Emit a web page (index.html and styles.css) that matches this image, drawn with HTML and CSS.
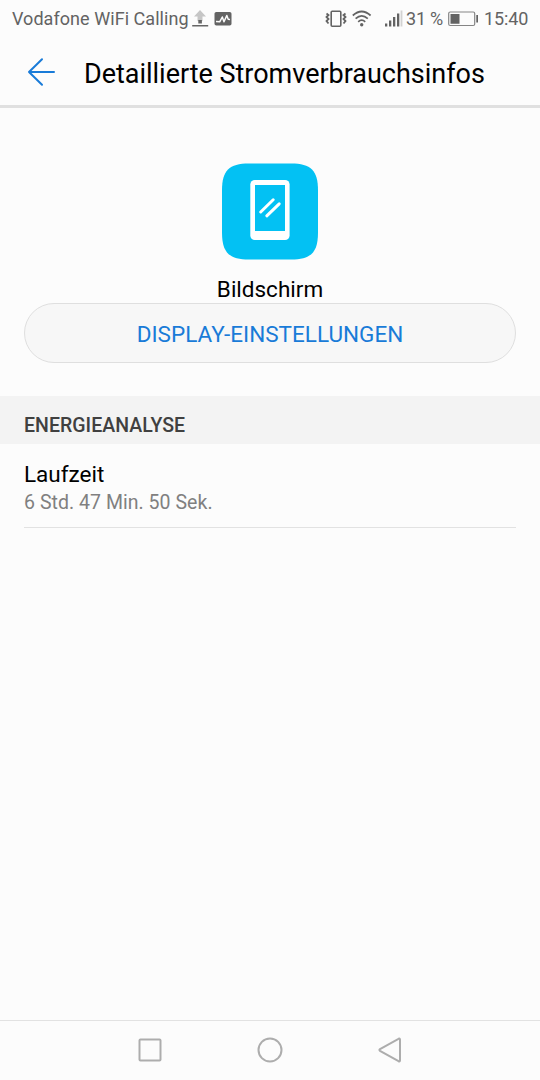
FILE: index.html
```html
<!DOCTYPE html>
<html lang="de">
<head>
  <meta charset="UTF-8" />
  <meta name="viewport" content="width=device-width, initial-scale=1.0"/>
  <title>Detaillierte Stromverbrauchsinfos</title>
  <link rel="stylesheet" href="styles.css">
</head>
<body>
  <!-- STATUS BAR -->
  <div class="status-bar">
    <span class="carrier">Vodafone WiFi Calling</span>
    <svg class="icon-upload" width="18" height="20" viewBox="0 0 18 20">
      <path d="M9 1 L15 7.500 H11.500 V12 H6.500 V7.500 H3 Z" fill="#c6c6c6"/>
      <path d="M7.300 11 H10.900 V14.500 H7.300 Z M1.200 15.900 H17.200 V17.400 H1.200 Z" fill="#666"/>
    </svg>
    <svg class="icon-activity" width="18" height="14" viewBox="0 0 18 14">
      <rect x=".5" y="0" width="17" height="13.500" rx="1.800" fill="#636363"/>
      <path d="M2 9.500 L5.700 9.800 L8.300 5 L10 9.800 L12.800 3.500 L14.200 7.300 L16 7.500" fill="none" stroke="#fcfcfc" stroke-width="1.500" stroke-linejoin="round"/>
    </svg>
    <div class="status-right">
      <svg class="icon-vibrate" width="22" height="18" viewBox="0 0 22 18" fill="none" stroke="#636363">
        <rect x="6.200" y="1.200" width="9.600" height="15" rx="1" stroke-width="1.600"/>
        <path d="M1.500 3.500 L3.500 5 L1.500 7 L3.500 9 L1.500 11 L3.500 13.500 M20.500 3.500 L18.500 5 L20.500 7 L18.500 9 L20.500 11 L18.500 13.500" stroke-width="1.800"/>
      </svg>
      <svg class="icon-wifi" width="20" height="18" viewBox="0 0 20 18" fill="none" stroke="#636363" stroke-width="1.700">
        <path d="M.8 5.500 Q9.700 -2.500 18.600 5.500 M3.600 8.700 Q9.700 3 15.800 8.700 M6.200 11.800 Q9.700 8.500 13.200 11.800"/>
        <circle cx="9.700" cy="14.800" r="1.700" fill="#636363" stroke="none"/>
      </svg>
      <svg class="icon-signal" width="18" height="18" viewBox="0 0 18 18" fill="#636363">
        <path d="M0 13.500 h2.300 v3 h-2.300 Z M4 10.500 h2.300 v6 h-2.300 Z M8 7 h2.300 v9.500 h-2.300 Z M12 3.500 h2.300 v13 h-2.300 Z"/>
        <path d="M15.600 .5 h1.800 v16 h-1.800 Z" fill="#d2d2d2"/>
      </svg>
      <span class="percent">31 %</span>
      <svg class="icon-battery" width="31" height="16" viewBox="0 0 31 16">
        <rect x=".7" y="1" width="26" height="13.500" rx="1.500" fill="none" stroke="#858585" stroke-width="1.200"/>
        <path d="M2.500 3 h9 v9.700 h-9 Z M28.300 4 h1.700 v7.500 h-1.700 Z" fill="#636363"/>
      </svg>
      <span class="clock">15:40</span>
    </div>
  </div>

  <!-- HEADER -->
  <header class="header">
    <svg class="icon-back" width="30" height="30" viewBox="0 0 30 30" fill="none" stroke="#197bd8" stroke-width="2" stroke-linecap="round" stroke-linejoin="round">
      <path d="M27 15 H2 M15 2.200 L2 15 L15 27.800"/>
    </svg>
    <h1>Detaillierte Stromverbrauchsinfos</h1>
  </header>

  <!-- CONTENT -->
  <main class="content">
    <div class="app">
      <svg class="app-icon" width="96" height="97" viewBox="0 -.5 96 97">
        <path d="M0 27 C0 7 7 0 27 0 H69 C89 0 96 7 96 27 V69 C96 89 89 96 69 96 H27 C7 96 0 89 0 69 Z" fill="#03c1f3"/>
        <rect x="28.300" y="16.500" width="39.300" height="60" rx="4.500" fill="#fff"/>
        <path d="M33 21.500 H63 V67.500 H33 Z" fill="#03c1f3"/>
        <path d="M38.700 48.500 L51.200 36.300 M44.800 52.300 L57.200 40.300" stroke="#fff" stroke-width="3" stroke-linecap="round"/>
      </svg>
      <span class="app-name">Bildschirm</span>
      <button class="btn">DISPLAY-EINSTELLUNGEN</button>
    </div>

    <h2>ENERGIEANALYSE</h2>
    <div class="item">
      <div class="item-title">Laufzeit</div>
      <div class="item-summary">6 Std. 47 Min. 50 Sek.</div>
    </div>
  </main>

  <!-- NAVIGATION BAR -->
  <nav>
    <svg width="26" height="26" viewBox="0 0 26 26"><rect x="2.500" y="2.500" width="21" height="21" rx="1"/></svg>
    <svg width="26" height="26" viewBox="0 0 26 26"><circle cx="13" cy="13" r="11.500"/></svg>
    <svg width="26" height="26" viewBox="0 0 26 26"><path d="M3 12.200 L21.500 1.800 Q23 1.200 23 2.500 V23.500 Q23 24.800 21.500 24.200 L3 13.800 Q1.800 13 3 12.200 Z"/></svg>
  </nav>
</body>
</html>
```
FILE: styles.css
```css
* { box-sizing: border-box; }
body { display: flex; flex-direction: column; height: 1080px; margin: 0; background: #fcfcfc; color: #000; font-family: Roboto, sans-serif; }
svg { display: block; flex: none; }

/* Status bar */
.status-bar { display: flex; align-items: center; height: 38px; padding: 0 12px; color: #636363; font-size: 18px; line-height: 38px; white-space: nowrap; }
.carrier { width: 179px; letter-spacing: 0.05px; }
.icon-activity { margin-left: 5px; }
.status-right { display: flex; align-items: center; margin-left: auto; }
.icon-wifi { margin-left: 5px; }
.icon-signal { margin-left: 13px; }
.percent { width: 45px; padding-left: 3px; letter-spacing: -0.2px; }
.clock { width: 49px; padding-left: 5px; letter-spacing: -0.1px; }

/* Header */
.header { display: flex; align-items: center; height: 70px; padding: 0 27px; border-bottom: 3px solid #e0e0e0; }
.header h1 { margin: 0 0 0 27px; padding-top: 4px; font-size: 27px; font-weight: 400; line-height: 36px; letter-spacing: -0.02px; white-space: nowrap; }

/* Content */
.content { flex: 1; }
.app { display: flex; flex-direction: column; align-items: center; padding: 55px 24px 33px; }
.app-name { margin: 15px 0 -1px; font-size: 22.5px; line-height: 29px; }
.btn { width: 100%; height: 60px; padding: 1px 0 0; border: 1px solid #dfdfdf; border-radius: 30px; background: #f7f7f7; color: #197bd8; font-family: inherit; font-size: 22.5px; }
h2 { height: 48px; margin: 0; padding: 11px 24px 0; background: #f3f3f3; color: #404040; font-size: 19.5px; font-weight: 500; line-height: 37px; letter-spacing: 0.04px; }
.item { height: 84px; margin: 0 24px; padding-top: 15px; border-bottom: 1px solid #e2e2e2; }
.item-title { font-size: 22.5px; line-height: 30px; }
.item-summary { color: #808080; font-size: 19.5px; line-height: 27px; letter-spacing: 0.04px; }

/* Navigation bar */
nav { display: flex; justify-content: center; gap: 94px; height: 60px; padding-top: 16px; border-top: 1px solid #e2e2e2; }
nav svg { fill: none; stroke: #adadad; stroke-width: 2; }
```
